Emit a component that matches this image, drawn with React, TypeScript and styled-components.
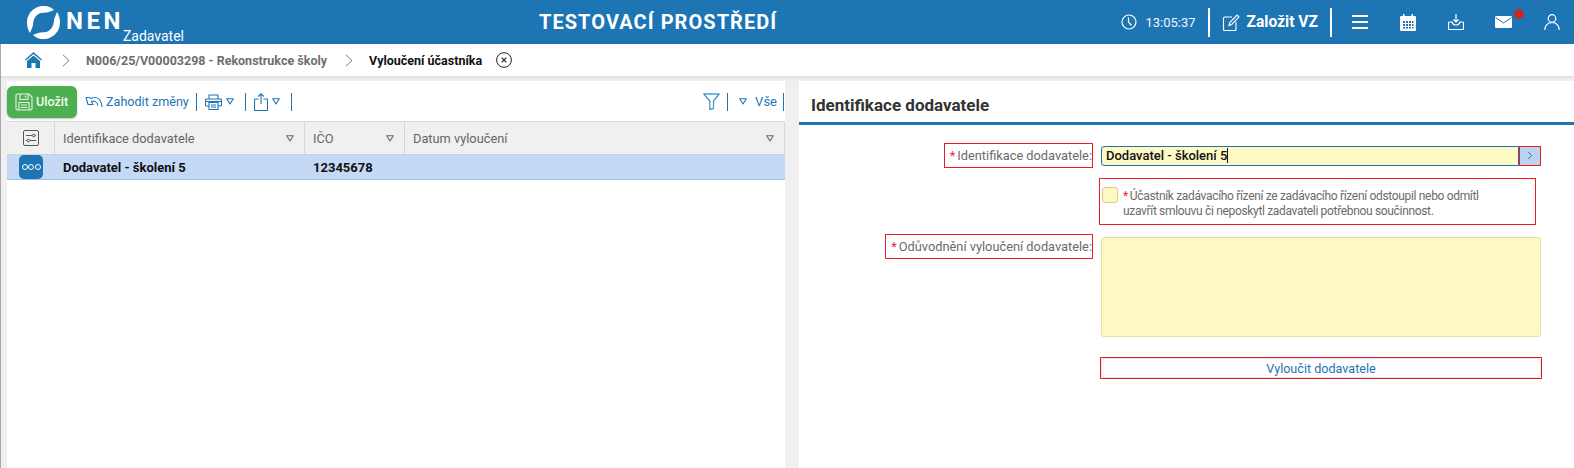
import React from 'react';
import styled, { createGlobalStyle } from 'styled-components';

const BLUE = '#1e75b4';

const GlobalStyle = createGlobalStyle`
  html, body {
    margin: 0;
    padding: 0;
    height: 468px;
    overflow: hidden;
    background: #f0f0f0;
    font-family: Roboto, "Liberation Sans", sans-serif;
  }
  * {
    box-sizing: border-box;
  }
`;

const Triangle: React.FC<{ color?: string }> = ({ color = BLUE }) => (
  <svg width="8" height="7" viewBox="0 0 8 7" fill="none">
    <path d="M.7.7h6.6L4 6z" stroke={color} strokeWidth="1.1" strokeLinejoin="round" />
  </svg>
);

const Logo = () => (
  <svg width="33" height="33" viewBox="0 0 33 33" fill="#fff">
    <path d="M0 16.500A16.500 16.500 0 0 1 27 3.800C22.500 6.500 19.500 6.500 16 6.800 10 7 6 12 6 19.500L3 27C1 24 0 20.500 0 16.500z" />
    <path d="M33 16.500A16.500 16.500 0 0 1 6 29.200C10.500 26.500 13.500 26.500 17 26.200 23 26 27 21 27 13.500L30 6C32 9 33 12.500 33 16.500z" />
  </svg>
);

const ClockIcon = () => (
  <svg width="16" height="16" viewBox="0 0 16 16" fill="none" stroke="#fff" strokeWidth="1.200">
    <circle cx="8" cy="8" r="7" />
    <path d="M7.500 3.500V8l3 3.500" />
  </svg>
);

const EditIcon = () => (
  <svg width="18" height="17" viewBox="0 0 18 17" fill="none" stroke="#fff" strokeWidth="1.100">
    <path d="M10 3H2.500a1 1 0 0 0-1 1v11.500a1 1 0 0 0 1 1H13a1 1 0 0 0 1-1V8" />
    <path d="M7 11.500l.8-3L15 1l2 2-7.300 7.500z" />
  </svg>
);

const MenuIcon = () => (
  <svg width="16" height="14" viewBox="0 0 16 14" fill="#fff">
    <rect width="16" height="2" y="0" rx=".5" />
    <rect width="16" height="2" y="6" rx=".5" />
    <rect width="16" height="2" y="12" rx=".5" />
  </svg>
);

const CalendarIcon = () => (
  <svg width="16" height="17" viewBox="0 0 16 17" fill="#fff">
    <path d="M1 2h2V0h1.500v2h7V0H13v2h2a1 1 0 0 1 1 1v13a1 1 0 0 1-1 1H1a1 1 0 0 1-1-1V3a1 1 0 0 1 1-1z" />
    <path
      fill={BLUE}
      d="M3 7h2v2H3zM6 7h2v2H6zM9 7h2v2H9zM12 7h1.500v2H12zM3 10h2v2H3zM6 10h2v2H6zM9 10h2v2H9zM12 10h1.500v2H12zM3 13h2v1.500H3zM6 13h2v1.500H6zM9 13h2v1.500H9zM12 13h1.500v1.500H12z"
    />
  </svg>
);

const DownloadIcon = () => (
  <svg width="16" height="16" viewBox="0 0 16 16" fill="none" stroke="#fff" strokeWidth="1.200">
    <path d="M8 0v7.500M5.500 5.500 8 8l2.500-2.500" />
    <path d="M4 8H1.500a1 1 0 0 0-1 1v5.500a1 1 0 0 0 1 1h13a1 1 0 0 0 1-1V9a1 1 0 0 0-1-1H12c-.5 2-2 3-4 3s-3.500-1-4-3z" />
  </svg>
);

const MailIcon = () => (
  <svg width="17" height="12" viewBox="0 0 17 12">
    <rect width="17" height="12" rx="1.200" fill="#fff" />
    <path d="M.5 1.500 8.500 7l8-5.500" fill="none" stroke={BLUE} strokeWidth="1" />
  </svg>
);

const UserIcon = () => (
  <svg width="16" height="16" viewBox="0 0 16 16" fill="none" stroke="#fff" strokeWidth="1.200">
    <circle cx="8" cy="4.500" r="3.800" />
    <path d="M.8 16c0-4.500 3-7.500 7.200-7.500s7.200 3 7.200 7.500" />
  </svg>
);

const HomeIcon = () => (
  <svg width="17" height="16" viewBox="0 0 17 16" fill={BLUE}>
    <path d="M8.500 0 17 7.400l-.9 1L8.500 2 .9 8.400l-.9-1z" />
    <path d="M8.500 3.400 15 8.900V16h-4.500v-5h-4v5H2V8.900z" />
  </svg>
);

const ChevronIcon = () => (
  <svg width="8" height="13" viewBox="0 0 8 13" fill="none" stroke="#777" strokeWidth="1">
    <path d="m1 .8 6 5.700-6 5.700" />
  </svg>
);

const CloseIcon = () => (
  <svg width="16" height="16" viewBox="0 0 16 16" fill="none" stroke="#222" strokeWidth="1">
    <circle cx="8" cy="8" r="7.400" />
    <path d="m5.700 5.700 4.600 4.600m0-4.600-4.600 4.600" strokeWidth="1.200" />
  </svg>
);

const SaveIcon = () => (
  <svg width="18" height="18" viewBox="0 0 18 18" fill="none" stroke="#e8f5e9" strokeWidth="1.100">
    <path d="M2.500 1H14l3 3v11.500a1.500 1.500 0 0 1-1.500 1.500h-13A1.500 1.500 0 0 1 1 15.500v-13A1.500 1.500 0 0 1 2.500 1z" />
    <path d="M5 1v5.500h8V1M10.500 2.500v2.500M4 17v-7.500h10V17M6 12h6M6 14.500h6" />
  </svg>
);

const UndoIcon = () => (
  <svg width="18" height="12" viewBox="0 0 18 12" fill="none" stroke={BLUE} strokeWidth="1.100">
    <path d="M1 1.500h3l2.500 1C9 1 12.500 1 14.500 3.500c1.500 1.800 2.300 4.500 2.500 7.500" />
    <path d="M1 1.500 3 8.500h5c-.5-1.300-1-2-1.500-3 2.500-1 5.500 0 6.500 4" />
  </svg>
);

const PrinterIcon = () => (
  <svg width="17" height="16" viewBox="0 0 17 16" fill="none" stroke={BLUE} strokeWidth="1.100">
    <path d="M4 5V1h9v4M4 12H1.500a1 1 0 0 1-1-1V6a1 1 0 0 1 1-1h14a1 1 0 0 1 1 1v5a1 1 0 0 1-1 1H13" />
    <path d="M4 8.500h9v7H4zM6 11h5M6 13h5" />
    <path d="M.5 7.500h16" />
  </svg>
);

const ShareIcon = () => (
  <svg width="14" height="18" viewBox="0 0 14 18" fill="none" stroke={BLUE} strokeWidth="1.100">
    <path d="M4.500 6H1a.5.5 0 0 0-.5.500v10.500a.5.5 0 0 0 .5.500h12a.5.5 0 0 0 .5-.5V6.500A.5.5 0 0 0 13 6H9.500" />
    <path d="M7 11V1M4.200 3.500 7 .8l2.800 2.700" />
  </svg>
);

const FilterIcon = () => (
  <svg width="17" height="17" viewBox="0 0 17 17" fill="none" stroke="#4a9ad4" strokeWidth="1.300">
    <path d="M.8 1h15.400L10.500 8v7.500l-3.700 1V8z" strokeLinejoin="round" />
  </svg>
);

const ColumnsIcon = () => (
  <svg width="16" height="16" viewBox="0 0 16 16" fill="none" stroke="#555" strokeWidth="1">
    <rect x=".5" y=".5" width="15" height="15" rx="1.500" />
    <path d="M3 5.500h6.500M12 5.500h1M3 10.500h1M7 10.500h6" />
    <circle cx="10.800" cy="5.500" r="1.300" />
    <circle cx="5.300" cy="10.500" r="1.300" />
  </svg>
);

const App: React.FC = () => (
  <Page>
    <GlobalStyle />
    <Header>
      <Brand>
        <Logo />
        <BrandName>NEN</BrandName>
        <BrandRole>Zadavatel</BrandRole>
      </Brand>
      <EnvTitle>TESTOVACÍ PROSTŘEDÍ</EnvTitle>
      <HeaderTools>
        <ClockIcon />
        <Clock>13:05:37</Clock>
        <HeaderDivider />
        <EditIcon />
        <CreateLabel>Založit VZ</CreateLabel>
        <HeaderDivider />
        <IconSlot $width={16} $margin={8}>
          <MenuIcon />
        </IconSlot>
        <IconSlot $width={16} $margin={32}>
          <CalendarIcon />
        </IconSlot>
        <IconSlot $width={16} $margin={32}>
          <DownloadIcon />
        </IconSlot>
        <IconSlot $width={17} $margin={31}>
          <MailIcon />
          <Badge />
        </IconSlot>
        <IconSlot $width={16} $margin={32}>
          <UserIcon />
        </IconSlot>
      </HeaderTools>
    </Header>

    <Breadcrumb>
      <HomeIcon />
      <CrumbChevron $margin={20}>
        <ChevronIcon />
      </CrumbChevron>
      <Crumb>N006/25/V00003298 - Rekonstrukce školy</Crumb>
      <CrumbChevron $margin={18}>
        <ChevronIcon />
      </CrumbChevron>
      <CurrentCrumb>Vyloučení účastníka</CurrentCrumb>
      <CloseIcon />
    </Breadcrumb>

    <Content>
      <ListPanel>
        <Toolbar>
          <SaveButton>
            <SaveIcon />
            Uložit
          </SaveButton>
          <ToolLink>
            <UndoIcon />
            Zahodit změny
          </ToolLink>
          <ToolDivider />
          <ToolGroup>
            <PrinterIcon />
            <Triangle />
          </ToolGroup>
          <ToolDivider />
          <ToolGroup>
            <ShareIcon />
            <Triangle />
          </ToolGroup>
          <ToolDivider />
          <ToolbarEnd>
            <FilterIcon />
            <ToolDivider $after={11} />
            <Triangle />
            <AllLabel>Vše</AllLabel>
            <ToolDivider />
          </ToolbarEnd>
        </Toolbar>

        <GridHead>
          <SettingsCell>
            <ColumnsIcon />
          </SettingsCell>
          <HeadCell>
            Identifikace dodavatele
            <Triangle color="#666" />
          </HeadCell>
          <HeadCell>
            IČO
            <Triangle color="#666" />
          </HeadCell>
          <HeadCell>
            Datum vyloučení
            <Triangle color="#666" />
          </HeadCell>
        </GridHead>

        <GridRow>
          <RowAction>
            <Dot />
            <Dot />
            <Dot />
          </RowAction>
          <RowCell>Dodavatel - školení 5</RowCell>
          <RowCell>12345678</RowCell>
          <RowCell />
        </GridRow>
      </ListPanel>

      <DetailPanel>
        <DetailTitle>Identifikace dodavatele</DetailTitle>
        <Form>
          <FieldLabel>
            <Required>*</Required>Identifikace dodavatele:
          </FieldLabel>
          <LookupField>
            <LookupInput>
              Dodavatel - školení 5<Caret />
            </LookupInput>
            <LookupButton>
              <svg width="6" height="9" viewBox="0 0 6 9" fill="none" stroke={BLUE} strokeWidth="1">
                <path d="m1 .8 3.700 3.700L1 8.200" />
              </svg>
            </LookupButton>
          </LookupField>

          <CheckField>
            <CheckBox />
            <CheckText>
              <Required>*</Required>Účastník zadávacího řízení ze zadávacího řízení odstoupil nebo odmítl
              <br />
              uzavřít smlouvu či neposkytl zadavateli potřebnou součinnost.
            </CheckText>
          </CheckField>

          <FieldLabel>
            <Required>*</Required>Odůvodnění vyloučení dodavatele:
          </FieldLabel>
          <TextArea />

          <ActionBox>
            <ActionButton>Vyloučit dodavatele</ActionButton>
          </ActionBox>
        </Form>
      </DetailPanel>
    </Content>
  </Page>
);

export default App;

const Page = styled.div`
  display: flex;
  flex-direction: column;
  height: 468px;
  width: 1574px;
  overflow: hidden;
`;

const Header = styled.header`
  display: flex;
  align-items: center;
  height: 44px;
  flex: none;
  background: ${BLUE};
  color: #fff;
`;

const Brand = styled.div`
  display: flex;
  align-items: center;
  width: 539px;
  padding-left: 27px;
  flex: none;
`;

const BrandName = styled.span`
  margin-left: 6px;
  font-size: 24px;
  font-weight: 700;
  letter-spacing: 3.500px;
  margin-top: -3px;
`;

const BrandRole = styled.span`
  align-self: flex-end;
  margin-left: -1px;
  margin-bottom: -5px;
  font-size: 14px;
`;

const EnvTitle = styled.div`
  font-size: 20px;
  font-weight: 700;
  letter-spacing: 1.050px;
  white-space: nowrap;
`;

const HeaderTools = styled.div`
  display: flex;
  align-items: center;
  margin-left: auto;
  padding-right: 14px;
`;

const Clock = styled.span`
  margin-left: 8px;
  font-size: 13px;
  color: #f2f7fb;
`;

const HeaderDivider = styled.span`
  width: 2px;
  height: 29px;
  margin: 0 12px;
  background: #fff;
`;

const CreateLabel = styled.span`
  margin-left: 7px;
  font-size: 15.600px;
  font-weight: 700;
`;

const IconSlot = styled.span<{ $width: number; $margin: number }>`
  position: relative;
  display: flex;
  width: ${(p) => p.$width}px;
  margin-left: ${(p) => p.$margin}px;
`;

const Badge = styled.span`
  position: absolute;
  top: -7px;
  right: -12px;
  width: 10px;
  height: 10px;
  border-radius: 50%;
  background: #c62828;
`;

const Breadcrumb = styled.nav`
  display: flex;
  align-items: center;
  height: 32px;
  flex: none;
  padding-left: 24px;
  background: #fff;
  border-left: 1px solid #a8a8a8;
  box-shadow: 0 1px 4px rgba(0, 0, 0, 0.12);
  position: relative;
  font-size: 12.500px;
  font-weight: 700;
`;

const CrumbChevron = styled.span<{ $margin: number }>`
  display: flex;
  margin: 0 16px 0 ${(p) => p.$margin}px;
`;

const Crumb = styled.span`
  color: #6e6e6e;
`;

const CurrentCrumb = styled.span`
  margin-right: 14px;
  color: #111;
`;

const Content = styled.div`
  display: flex;
  flex: 1;
  min-height: 0;
  padding-top: 5px;
  background: #f0f0f0;
  border-left: 1px solid #a8a8a8;
`;

const ListPanel = styled.section`
  width: 778px;
  margin-left: 6px;
  background: #fff;
`;

const Toolbar = styled.div`
  display: flex;
  align-items: center;
  height: 40px;
  padding-top: 1px;
  color: ${BLUE};
  font-size: 12.600px;
`;

const SaveButton = styled.button`
  display: flex;
  align-items: center;
  gap: 3px;
  width: 70px;
  height: 32px;
  margin: 0 8px 0 0;
  padding: 0 0 0 8px;
  border: 0;
  border-radius: 6px;
  background: #4caf50;
  box-shadow: 0 1px 2px rgba(0, 0, 0, 0.25);
  color: #f4fbf4;
  font: 500 12.600px Roboto, sans-serif;
`;

const ToolLink = styled.span`
  display: flex;
  align-items: center;
  gap: 3px;
  white-space: nowrap;
`;

const ToolDivider = styled.span<{ $after?: number }>`
  width: 1px;
  height: 18px;
  margin: 0 ${(p) => p.$after ?? 7}px 0 7px;
  background: ${BLUE};
`;

const ToolGroup = styled.span`
  display: flex;
  align-items: center;
  gap: 4px;
  margin: 0 4px 0 1px;
`;

const ToolbarEnd = styled.div`
  display: flex;
  align-items: center;
  margin-left: auto;
  margin-right: -6px;
  font-size: 13px;
`;

const AllLabel = styled.span`
  margin-left: 8px;
  margin-right: -1px;
`;

const columns = '48px 250px 100px 1fr';

const GridHead = styled.div`
  display: grid;
  grid-template-columns: ${columns};
  height: 34px;
  background: #f0f0f0;
  border-top: 1px solid #dcdcdc;
  border-bottom: 1px solid #cfcfcf;
  border-right: 1px solid #d8d8d8;
  color: #666;
  font-size: 12.800px;
`;

const SettingsCell = styled.div`
  display: flex;
  align-items: center;
  justify-content: center;
  border-right: 1px solid #d8d8d8;
`;

const HeadCell = styled.div`
  display: flex;
  align-items: center;
  justify-content: space-between;
  padding: 0 10px 0 8px;
  border-right: 1px solid #d8d8d8;

  &:last-child {
    border-right: 0;
  }
`;

const GridRow = styled.div`
  display: grid;
  grid-template-columns: ${columns};
  align-items: center;
  height: 25px;
  background: #c3d9f5;
  border-bottom: 1px solid #9cc2e8;
`;

const RowAction = styled.div`
  display: flex;
  align-items: center;
  justify-content: center;
  gap: 0.500px;
  width: 24px;
  height: 24px;
  margin-left: 12px;
  border-radius: 5px;
  background: ${BLUE};
`;

const Dot = styled.span`
  width: 6px;
  height: 6px;
  border: 1.600px solid #fff;
  border-radius: 50%;
`;

const RowCell = styled.div`
  padding-left: 8px;
  color: #111;
  font-size: 13px;
  font-weight: 700;
`;

const DetailPanel = styled.section`
  flex: 1;
  margin-left: 14px;
  background: #fff;
`;

const DetailTitle = styled.h2`
  display: flex;
  align-items: center;
  height: 44px;
  margin: 0;
  padding: 7px 0 0 12px;
  border-bottom: 3px solid ${BLUE};
  color: #333;
  font-size: 17px;
  font-weight: 700;
`;

const Form = styled.div`
  display: grid;
  grid-template-columns: max-content 440px;
  column-gap: 8px;
  justify-content: end;
  padding: 18px 33px 0 0;
  color: #6b6b6b;
`;

const FieldLabel = styled.label`
  justify-self: end;
  display: flex;
  align-items: center;
  height: 25px;
  padding: 0 0 0 5px;
  border: 1px solid #ed1c24;
  white-space: nowrap;
  font-size: 12.800px;
`;

const Required = styled.span`
  margin-right: 2px;
  color: #d32f2f;
`;

const LookupField = styled.div`
  display: flex;
  align-items: center;
  align-self: start;
  height: 25px;
  padding: 4px 0;
`;

const LookupInput = styled.div`
  display: flex;
  align-items: center;
  flex: 1;
  height: 20px;
  padding-left: 4px;
  background: #fef9c3;
  border: 1px solid ${BLUE};
  border-radius: 3px 0 0 3px;
  color: #111;
  font-size: 13px;
  font-weight: 500;
`;

const Caret = styled.span`
  width: 1px;
  height: 15px;
  background: #111;
`;

const LookupButton = styled.div`
  display: flex;
  align-items: center;
  justify-content: center;
  width: 22px;
  height: 20px;
  background: #b9d3f0;
  outline: 1px solid #ed1c24;
  outline-offset: -1px;
`;

const CheckField = styled.div`
  grid-column: 2;
  display: flex;
  gap: 5px;
  height: 47px;
  margin: 10px 5px 9px -2px;
  padding: 10px 0 0 2px;
  border: 1px solid #ed1c24;
  line-height: 14.500px;
`;

const CheckBox = styled.span`
  flex: none;
  width: 16px;
  height: 16px;
  margin-top: -2px;
  background: #fef9c3;
  border: 1px solid #d9d08c;
  border-radius: 3px;
`;

const CheckText = styled.div`
  white-space: nowrap;
  font-size: 12px;
  letter-spacing: -0.330px;
`;

const TextArea = styled.div`
  height: 100px;
  margin-top: 3px;
  background: #fef9c3;
  border: 1px solid #e6e0a0;
  border-radius: 3px;
`;

const ActionBox = styled.div`
  grid-column: 2;
  margin: 20px -1px 0;
  padding: 1px;
  border: 1px solid #ed1c24;
`;

const ActionButton = styled.button`
  display: block;
  width: 100%;
  height: 18px;
  padding: 0;
  border: 0;
  border-radius: 3px;
  background: #fff;
  box-shadow: 0 0 2px rgba(0, 0, 0, 0.4);
  color: ${BLUE};
  font: 400 12.600px Roboto, sans-serif;
`;
